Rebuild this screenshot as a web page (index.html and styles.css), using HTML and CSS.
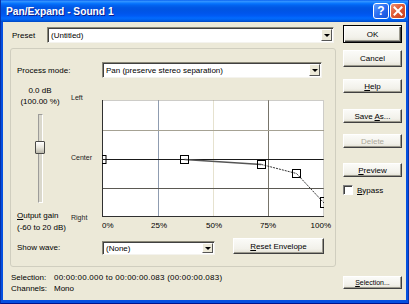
FILE: index.html
```html
<!DOCTYPE html>
<html>
<head>
<meta charset="utf-8">
<link rel="stylesheet" href="styles.css">
</head>
<body>
<div class="window">
  <div class="titlebar">
    <span class="title">Pan/Expand - Sound 1</span>
    <div class="caption-btns">
      <span class="cbtn help">?</span>
      <span class="cbtn close"><svg width="10" height="10" viewBox="0 0 10 10"><path d="M1.5 1.5 L8.5 8.5 M8.5 1.5 L1.5 8.5" stroke="#fff" stroke-width="2" stroke-linecap="square"/></svg></span>
    </div>
  </div>
  <div class="client">
    <div class="main">
      <div class="preset-row">
        <span class="lbl preset-lbl">Preset</span>
        <div class="combo preset-combo"><span class="val">(Untitled)</span><span class="arrow"><i></i></span></div>
      </div>
      <div class="group">
        <div class="mode-row">
          <span class="lbl mode-lbl">Process mode:</span>
          <div class="combo mode-combo"><span class="val">Pan (preserve stereo separation)</span><span class="arrow"><i></i></span></div>
        </div>
        <div class="graph-row">
          <div class="gain">
            <div class="gain-val">0.0 dB<br>(100.00 %)</div>
            <div class="track"><div class="groove"></div><div class="thumb"></div></div>
            <div class="gain-lbl"><u>O</u>utput gain<br>(-60 to 20 dB)</div>
          </div>
          <div class="axis"><span>Left</span><span>Center</span><span>Right</span></div>
          <svg class="graph" width="230" height="132" viewBox="0 0 230 132">
            <svg x="0" y="0" width="222" height="117" viewBox="0 0 222 117">
              <rect x="0" y="0" width="222" height="117" fill="#fff"/>
              <line x1="56.5" y1="0" x2="56.5" y2="117" stroke="#8F9CB0" stroke-width="1"/>
              <line x1="111.5" y1="0" x2="111.5" y2="117" stroke="#E6E2CF" stroke-width="1"/>
              <line x1="166.5" y1="0" x2="166.5" y2="117" stroke="#77746A" stroke-width="1"/>
              <line x1="0" y1="30.5" x2="222" y2="30.5" stroke="#A6A294" stroke-width="1"/>
              <line x1="0" y1="88.5" x2="222" y2="88.5" stroke="#5B5952" stroke-width="1"/>
              <line x1="0" y1="59.5" x2="222" y2="59.5" stroke="#1A1A1A" stroke-width="1"/>
              <rect x="0.5" y="0.5" width="221" height="116" fill="none" stroke="#9A9890" stroke-dasharray="1 1"/>
              <line x1="0.5" y1="0" x2="0.5" y2="117" stroke="#303030"/>
              <line x1="0" y1="116.5" x2="222" y2="116.5" stroke="#303030"/>
              <polyline points="82.5,59.5 159.5,64.5" fill="none" stroke="#555" stroke-width="1.4"/>
              <polyline points="159.5,64.5 194.5,73.5 222,103" fill="none" stroke="#333" stroke-width="1" stroke-dasharray="2 1"/>
              <rect x="-4" y="55.5" width="8" height="8" fill="#fff" fill-opacity="0" stroke="#000"/>
              <rect x="78.5" y="55.5" width="8" height="8" fill="none" stroke="#000"/>
              <rect x="155.5" y="60.5" width="8" height="8" fill="none" stroke="#000"/>
              <rect x="190.5" y="69.5" width="8" height="8" fill="none" stroke="#000"/>
              <rect x="218.5" y="97.5" width="8" height="10" fill="none" stroke="#000"/>
            </svg>
            <g class="xlabels">
              <text x="0" y="128" text-anchor="start">0%</text>
              <text x="57" y="128" text-anchor="middle">25%</text>
              <text x="112" y="128" text-anchor="middle">50%</text>
              <text x="166" y="128" text-anchor="middle">75%</text>
              <text x="229" y="128" text-anchor="end">100%</text>
            </g>
          </svg>
        </div>
        <div class="wave-row">
          <span class="lbl wave-lbl">Show wave:</span>
          <div class="combo wave-combo"><span class="val">(None)</span><span class="arrow"><i></i></span></div>
          <div class="btn reset-btn"><span><u>R</u>eset Envelope</span></div>
        </div>
      </div>
      <div class="info">
        <span>Selection:</span><span class="sel-val">00:00:00.000 to 00:00:00.083 (00:00:00.083)</span>
        <span>Channels:</span><span>Mono</span>
      </div>
    </div>
    <div class="side">
      <div class="btn default b-ok">OK</div>
      <div class="btn b-cancel">Cancel</div>
      <div class="btn b-help"><span><u>H</u>elp</span></div>
      <div class="btn b-save"><span>Save <u>A</u>s...</span></div>
      <div class="btn disabled b-delete">Delete</div>
      <div class="btn b-preview"><span><u>P</u>review</span></div>
      <label class="bypass"><span class="check"></span><span><u>B</u>ypass</span></label>
      <div class="btn b-selection"><span><u>S</u>election...</span></div>
    </div>
  </div>
</div>
</body>
</html>
```
FILE: styles.css
```css
html, body {
  margin: 0;
  padding: 0;
}
body {
  width: 409px;
  height: 304px;
  overflow: hidden;
  font-family: "Liberation Sans", Arial, sans-serif;
  font-size: 8px;
  color: #000;
  background: #0A53E0;
}
.window {
  width: 409px;
  height: 304px;
  display: flex;
  flex-direction: column;
  background: #0550E0;
  box-sizing: border-box;
  border-left: 1px solid #0831A8;
  border-right: 1px solid #0831A8;
  border-bottom: 1px solid #00138C;
}
.titlebar {
  height: 22px;
  flex: none;
  display: flex;
  align-items: center;
  padding: 0 2px 0 5px;
  background: linear-gradient(to bottom, #0058EE 0%, #3593FF 5%, #288EFF 9%, #127DFF 13%, #036FFC 18%, #0262EE 25%, #0057E5 35%, #0054E3 45%, #0055EB 60%, #005BF5 72%, #026AFE 82%, #0062EF 90%, #0052D6 96%, #0046C0 100%);
}
.title {
  flex: 1;
  color: #fff;
  font-weight: bold;
  font-size: 10.2px;
  text-shadow: 1px 1px 0 #0A1E8C;
}
.caption-btns {
  display: flex;
  gap: 1px;
}
.cbtn {
  width: 16px;
  height: 16px;
  box-sizing: border-box;
  border: 1px solid #fff;
  border-radius: 3px;
  display: flex;
  align-items: center;
  justify-content: center;
  color: #fff;
  font-weight: bold;
  font-size: 12px;
  line-height: 1;
}
.cbtn.help {
  background: linear-gradient(135deg, #5A9BFF 0%, #2A6CF0 50%, #1450D8 100%);
}
.cbtn.close {
  background: linear-gradient(135deg, #F09070 0%, #E05A35 45%, #C8401E 100%);
}
.client {
  flex: 1;
  margin: 0 2px 3px 2px;
  background: #ECE9D8;
  display: flex;
  padding: 0 4px 0 7px;
}
.main {
  width: 326px;
  flex: none;
  display: flex;
  flex-direction: column;
}
.lbl {
  white-space: nowrap;
}
.preset-row {
  display: flex;
  align-items: center;
  margin-top: 5px;
  height: 16px;
}
.preset-lbl {
  width: 37px;
  padding-left: 2px;
  box-sizing: border-box;
}
.combo {
  height: 16px;
  box-sizing: border-box;
  background: #fff;
  border: 1px solid;
  border-color: #8A8878 #F4F3EE #F4F3EE #8A8878;
  box-shadow: inset 1px 1px 0 #404040;
  display: flex;
  align-items: stretch;
  padding: 1px 1px 1px 1px;
}
.combo .val {
  flex: 1;
  padding-left: 2px;
  display: flex;
  align-items: center;
  white-space: nowrap;
  overflow: hidden;
}
.combo .arrow {
  width: 11px;
  flex: none;
  box-sizing: border-box;
  background: #ECE9D8;
  border: 1px solid;
  border-color: #fff #555 #555 #fff;
  display: flex;
  align-items: center;
  justify-content: center;
}
.combo .arrow i {
  width: 0;
  height: 0;
  border-left: 3px solid transparent;
  border-right: 3px solid transparent;
  border-top: 3px solid #000;
}
.preset-combo {
  width: 287px;
}
.group {
  margin-top: 5px;
  height: 219px;
  box-sizing: border-box;
  border: 1px solid #D0CEBF;
  border-radius: 3px;
  padding: 13px 2px 0 6px;
  display: flex;
  flex-direction: column;
}
.mode-row {
  display: flex;
  align-items: center;
  height: 16px;
}
.mode-lbl {
  width: 85px;
}
.mode-combo {
  width: 220px;
}
.graph-row {
  display: flex;
  margin-top: 7px;
}
.gain {
  width: 54px;
  flex: none;
  display: flex;
  flex-direction: column;
}
.gain-val {
  width: 46px;
  text-align: center;
  line-height: 11px;
}
.track {
  position: relative;
  width: 46px;
  height: 89px;
  margin-top: 7px;
}
.groove {
  margin: 0 auto;
  width: 5px;
  height: 100%;
  box-sizing: border-box;
  border: 1px solid;
  border-color: #9D9C99 #fff #fff #9D9C99;
  background: #DAD8CC;
}
.thumb {
  position: absolute;
  left: 18px;
  top: 27px;
  width: 10px;
  height: 13px;
  box-sizing: border-box;
  border: 1px solid #4A4A48;
  border-radius: 1px;
  background: linear-gradient(to bottom, #FFFFFF 0%, #E8E6DC 50%, #B9B7AA 100%);
}
.gain-lbl {
  line-height: 12px;
  margin-top: 7px;
  white-space: nowrap;
}
.axis {
  width: 31px;
  flex: none;
  margin-top: 8px;
  height: 130px;
  display: flex;
  flex-direction: column;
  justify-content: space-between;
  line-height: 10px;
  font-size: 7px;
  color: #222;
}
.graph {
  display: block;
  flex: none;
  margin-top: 15px;
  overflow: visible;
}
.xlabels text {
  font-family: "Liberation Sans", Arial, sans-serif;
  font-size: 8px;
  fill: #000;
}
.wave-row {
  display: flex;
  margin-top: 4px;
  height: 18px;
}
.wave-lbl {
  width: 85px;
  line-height: 10px;
  margin-top: 5px;
}
.wave-combo {
  width: 113px;
  height: 14px;
  margin-top: 3px;
}
.btn {
  box-sizing: border-box;
  display: flex;
  align-items: center;
  justify-content: center;
  background: linear-gradient(to bottom, #FBFBF8 0%, #F2F1EA 70%, #E4E2D6 100%);
  border: 1px solid;
  border-color: #FFFFFF #404040 #404040 #FFFFFF;
  box-shadow: inset -1px -1px 0 #9C9A8E;
  white-space: nowrap;
}
.reset-btn {
  width: 91px;
  height: 16px;
  margin-left: 18px;
}
.info {
  margin-top: 5px;
  line-height: 11px;
  display: grid;
  grid-template-columns: 43px auto;
  padding-left: 1px;
  white-space: nowrap;
}
.sel-val {
  letter-spacing: 0.22px;
}
.side {
  width: 59px;
  flex: none;
  margin-left: 7px;
  display: flex;
  flex-direction: column;
}
.btn.default {
  border: 1px solid #000;
  box-shadow: inset 1px 1px 0 #fff, inset -1px -1px 0 #404040, inset -2px -2px 0 #9C9A8E;
}
.b-ok { margin-top: 3px; height: 18px; }
.b-cancel { margin-top: 7px; height: 17px; }
.b-help { margin-top: 12px; height: 14px; }
.b-save { margin-top: 16px; height: 14px; }
.b-delete { margin-top: 11px; height: 14px; }
.b-preview { margin-top: 15px; height: 14px; }
.btn.disabled {
  color: #ACA899;
}
.bypass {
  margin-top: 8px;
  height: 10px;
  display: flex;
  align-items: center;
  gap: 4px;
}
.check {
  width: 10px;
  height: 10px;
  box-sizing: border-box;
  background: #fff;
  border: 1px solid;
  border-color: #808080 #fff #fff #808080;
  box-shadow: inset 1px 1px 0 #404040;
}
.b-selection {
  margin-top: auto;
  margin-bottom: 11px;
  height: 13px;
  font-size: 7px;
}
```
